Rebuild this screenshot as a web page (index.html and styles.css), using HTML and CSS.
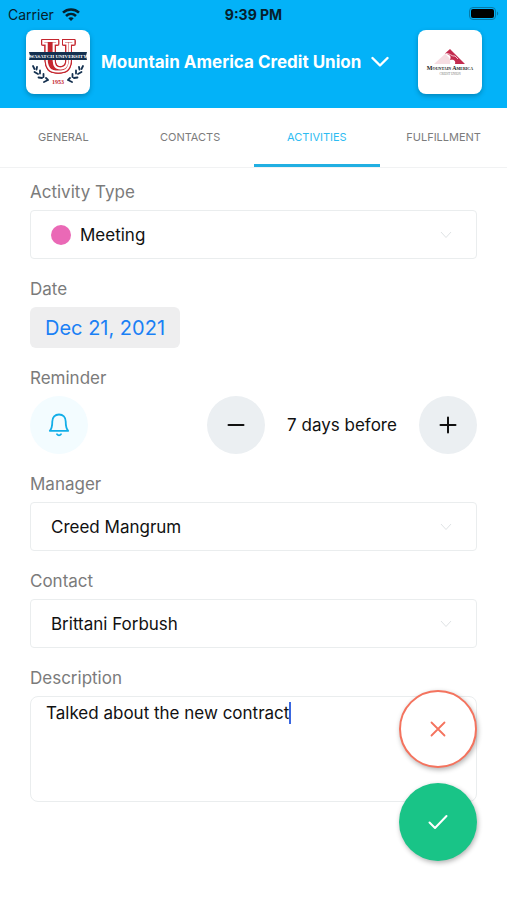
FILE: index.html
```html
<!DOCTYPE html>
<html lang="en">
  <head>
    <meta charset="UTF-8" />
    <meta name="viewport" content="width=device-width, initial-scale=1.0" />
    <title>Activities</title>
    <link rel="stylesheet" href="styles.css">
  </head>
  <body>
    <header class="app-header">
      <div class="status-bar">
        <div class="carrier">
          <span>Carrier</span>
          <svg width="18" height="13" viewBox="0 0 18 13" fill="none" stroke="#06202c" stroke-width="2.6">
            <path d="M1 4.6C5.6 0.4 12.4 0.4 17 4.6" />
            <path d="M4 8C6.9 5.3 11.1 5.3 14 8" />
            <path d="M9 13L6.3 10.2C7.8 8.9 10.2 8.9 11.7 10.2Z" fill="#06202c" stroke="none" />
          </svg>
        </div>
        <time class="clock">9:39 PM</time>
        <svg class="battery" width="30" height="14" viewBox="0 0 30 14">
          <rect x="0.5" y="0.5" width="26" height="12" rx="3.5" fill="none" stroke="#067aa8" />
          <rect x="2" y="2" width="23" height="9" rx="2" fill="#000" />
          <path d="M28 4.5C29.6 5.2 29.6 7.8 28 8.5Z" fill="#067aa8" />
        </svg>
      </div>

      <div class="brand-row">
        <div class="logo-tile">
          <svg width="64" height="64" viewBox="0 0 64 64" text-anchor="middle">
            <text class="crest-letter" x="32" y="41">U</text>
            <path d="M3 22H61L60 26L61 30H3L4 26Z" fill="#14304f" />
            <text class="crest-name" x="32" y="28">WASATCH UNIVERSITY</text>
            <g fill="none" stroke="#14304f" stroke-width="1.8" stroke-linecap="round">
              <path d="M7 36L8.5 39M11 37L10.5 39.5M8.5 42L12 44M14 40.5V43.5M12.5 47.5L16 48M17.5 44V47M18 52L21 50.5M20 48L22 50" />
              <path d="M57 36L55.5 39M53 37L53.5 39.5M55.5 42L52 44M50 40.5V43.5M51.5 47.5L48 48M46.5 44V47M46 52L43 50.5M44 48L42 50" />
            </g>
            <text class="crest-year" x="32" y="54">1953</text>
          </svg>
        </div>
        <button class="account-btn" type="button">
          <span>Mountain America Credit Union</span>
          <svg width="18" height="12" viewBox="0 0 18 12" fill="none" stroke="#fff" stroke-width="2.4" stroke-linecap="round" stroke-linejoin="round">
            <path d="M1.5 2L9 9.5L16.5 2" />
          </svg>
        </button>
        <div class="logo-tile">
          <svg width="64" height="64" viewBox="0 0 64 64" text-anchor="middle">
            <path d="M16 34L27 24C31 27 33 29 32 34Z" fill="#f6dde2" />
            <path d="M27 23.5L32 19L47 34H37C38 31 36 29 32 30C34 26 31 24 27 23.5Z" fill="#c32b4f" />
            <path d="M28 23.5C32 23 34 27 37 26L40 29" fill="none" stroke="#f0c3cd" stroke-width="1" />
            <text class="union-name" x="32" y="40"><tspan class="cap">M</tspan>OUNTAIN <tspan class="cap">A</tspan>MERICA</text>
            <text class="union-sub" x="32" y="45">CREDIT UNION</text>
          </svg>
        </div>
      </div>
    </header>

    <nav class="tabs">
      <a href="#general">GENERAL</a>
      <a href="#contacts">CONTACTS</a>
      <a href="#activities" class="active">ACTIVITIES</a>
      <a href="#fulfillment">FULFILLMENT</a>
    </nav>

    <form class="activity-form">
      <div class="field">
        <label for="activity-type">Activity Type</label>
        <div class="select-box">
          <span class="dot"></span>
          <select id="activity-type">
            <option>Meeting</option>
          </select>
          <svg class="chevron" width="12" height="8" viewBox="0 0 12 8"><path d="M1 1L6 6.5L11 1" /></svg>
        </div>
      </div>

      <div class="field">
        <label for="date">Date</label>
        <button class="date-btn" id="date" type="button">Dec 21, 2021</button>
      </div>

      <div class="field">
        <label for="reminder">Reminder</label>
        <div class="reminder-row">
          <button class="round-btn bell" id="reminder" type="button" aria-label="Toggle reminder">
            <svg width="22" height="24" viewBox="0 0 22 24" fill="none" stroke="#12aee8" stroke-width="1.8" stroke-linecap="round" stroke-linejoin="round">
              <path d="M1.8 17.8C4 15.5 4.3 13.5 4.3 8.5C4.3 4.3 7 1.5 11 1.5S17.7 4.3 17.7 8.5C17.7 13.5 18 15.5 20.2 17.8Z" />
              <path d="M9 21.3C10 22.6 12 22.6 13 21.3" />
            </svg>
          </button>
          <div class="stepper">
            <button class="round-btn" type="button" aria-label="Fewer days">
              <svg width="18" height="18" viewBox="0 0 18 18" stroke="#111" stroke-width="2" stroke-linecap="round"><path d="M1.5 9H16.5" /></svg>
            </button>
            <output>7 days before</output>
            <button class="round-btn" type="button" aria-label="More days">
              <svg width="18" height="18" viewBox="0 0 18 18" stroke="#111" stroke-width="2" stroke-linecap="round"><path d="M1.5 9H16.5M9 1.5V16.5" /></svg>
            </button>
          </div>
        </div>
      </div>

      <div class="field">
        <label for="manager">Manager</label>
        <div class="select-box">
          <select id="manager">
            <option>Creed Mangrum</option>
          </select>
          <svg class="chevron" width="12" height="8" viewBox="0 0 12 8"><path d="M1 1L6 6.5L11 1" /></svg>
        </div>
      </div>

      <div class="field">
        <label for="contact">Contact</label>
        <div class="select-box">
          <select id="contact">
            <option>Brittani Forbush</option>
          </select>
          <svg class="chevron" width="12" height="8" viewBox="0 0 12 8"><path d="M1 1L6 6.5L11 1" /></svg>
        </div>
      </div>

      <div class="field">
        <label for="description">Description</label>
        <div class="text-wrap">
          <textarea id="description">Talked about the new contract</textarea>
          <span class="caret"></span>
        </div>
      </div>

      <div class="fab-stack">
        <button class="fab cancel" type="reset" aria-label="Cancel">
          <svg width="16" height="16" viewBox="0 0 16 16" fill="none" stroke="#f4735e" stroke-width="1.8" stroke-linecap="round"><path d="M1.5 1.5L14.5 14.5M14.5 1.5L1.5 14.5" /></svg>
        </button>
        <button class="fab confirm" type="submit" aria-label="Save">
          <svg width="20" height="16" viewBox="0 0 20 16" fill="none" stroke="#fff" stroke-width="2" stroke-linecap="round" stroke-linejoin="round"><path d="M1.5 8.5L7 14L18.5 2" /></svg>
        </button>
      </div>
    </form>
  </body>
</html>
```
FILE: styles.css
```css
* {
  margin: 0;
  padding: 0;
  box-sizing: border-box;
}

body {
  min-height: 100vh;
  background: #fff;
  color: #111;
  font-family: Inter, sans-serif;
  font-size: 17px;
}

button,
select,
textarea {
  font-family: inherit;
}

button {
  border: none;
  cursor: pointer;
}

svg {
  display: block;
  flex-shrink: 0;
}

.app-header {
  background: #03b2f8;
  padding-bottom: 14px;
}

.status-bar {
  display: grid;
  grid-template-columns: 1fr auto 1fr;
  align-items: center;
  height: 28px;
  padding: 0 8px;
  font-size: 14px;
  color: #06202c;
}

.carrier {
  display: flex;
  align-items: center;
  gap: 8px;
}

.clock {
  font-weight: 700;
}

.battery {
  justify-self: end;
}

.brand-row {
  display: flex;
  justify-content: space-between;
  align-items: center;
  padding: 2px 25px 0 26px;
}

.logo-tile {
  width: 64px;
  height: 64px;
  border-radius: 8px;
  background: #fff;
  box-shadow: 0 2px 5px rgba(0, 0, 0, 0.25);
}

.crest-letter {
  font-family: "DejaVu Serif Condensed", "DejaVu Serif", serif;
  font-size: 41px;
  font-weight: 700;
  fill: #c4262e;
  stroke: #fff;
  stroke-width: 2px;
  filter: drop-shadow(1px 0 0 #c4262e) drop-shadow(-1px 0 0 #c4262e)
    drop-shadow(0 1px 0 #c4262e) drop-shadow(0 -1px 0 #c4262e);
}

.crest-name {
  font-family: "Liberation Serif", serif;
  font-size: 5px;
  font-weight: 700;
  fill: #fff;
}

.crest-year {
  font-family: "Liberation Serif", serif;
  font-size: 6px;
  font-weight: 700;
  fill: #c4262e;
}

.union-name {
  font-family: "Liberation Serif", serif;
  font-size: 4px;
  font-weight: 700;
  fill: #222;
}

.union-name .cap {
  font-size: 6px;
}

.union-sub {
  font-family: "Liberation Serif", serif;
  font-size: 3px;
  fill: #777;
}

.account-btn {
  display: flex;
  align-items: center;
  gap: 10px;
  flex: 1;
  padding-left: 11px;
  background: none;
  color: #fff;
  font-size: 17px;
  font-weight: 700;
  white-space: nowrap;
}

.tabs {
  display: grid;
  grid-template-columns: repeat(4, 1fr);
  height: 60px;
  border-bottom: 1px solid #f1f2f3;
}

.tabs a {
  display: flex;
  align-items: center;
  justify-content: center;
  border-top: 1px solid transparent;
  border-bottom: 3px solid transparent;
  color: #7c7c7c;
  font-size: 11px;
  text-decoration: none;
}

.tabs a.active {
  color: #2cbcf2;
  border-bottom-color: #21afe2;
}

.activity-form {
  display: flex;
  flex-direction: column;
  gap: 18px;
  padding: 12px 30px;
}

.field {
  display: flex;
  flex-direction: column;
  align-items: flex-start;
  gap: 6px;
}

.field label {
  line-height: 24px;
  color: #7b7b7b;
}

.select-box {
  display: flex;
  align-items: center;
  width: 100%;
  height: 49px;
  padding: 0 24px 0 20px;
  border: 1px solid #eaedee;
  border-radius: 4px;
}

.dot {
  width: 20px;
  height: 20px;
  margin-right: 9px;
  border-radius: 50%;
  background: #ea69b6;
}

.select-box select {
  flex: 1;
  height: 100%;
  appearance: none;
  border: none;
  background: none;
  color: #111;
  font-size: 17px;
}

.chevron {
  fill: none;
  stroke: #dfe3e5;
}

.date-btn {
  height: 41px;
  padding: 0 15px;
  border-radius: 6px;
  background: #eeeeef;
  color: #1a80f5;
  font-size: 20px;
}

.reminder-row {
  display: flex;
  justify-content: space-between;
  width: 100%;
}

.stepper {
  display: flex;
  align-items: center;
  justify-content: space-between;
  width: 270px;
}

.round-btn {
  display: flex;
  align-items: center;
  justify-content: center;
  width: 58px;
  height: 58px;
  border-radius: 50%;
  background: #ebeff2;
}

.round-btn.bell {
  background: #f3fcff;
}

.text-wrap {
  position: relative;
  width: 100%;
}

textarea {
  display: block;
  width: 100%;
  height: 106px;
  padding: 4px 15px;
  border: 1px solid #eaedee;
  border-radius: 8px;
  outline: none;
  resize: none;
  color: #111;
  font-size: 17px;
  line-height: 24px;
}

.caret {
  position: absolute;
  top: 6px;
  left: 259px;
  width: 2px;
  height: 22px;
  background: #3a67e0;
}

.fab-stack {
  position: fixed;
  right: 30px;
  bottom: 39px;
  display: flex;
  flex-direction: column;
  gap: 15px;
}

.fab {
  display: flex;
  align-items: center;
  justify-content: center;
  width: 78px;
  height: 78px;
  border-radius: 50%;
  box-shadow: 1px 2px 5px rgba(0, 0, 0, 0.3);
}

.fab.cancel {
  background: #fff;
  border: 2px solid #f4735e;
}

.fab.confirm {
  background: #19c487;
}
```
